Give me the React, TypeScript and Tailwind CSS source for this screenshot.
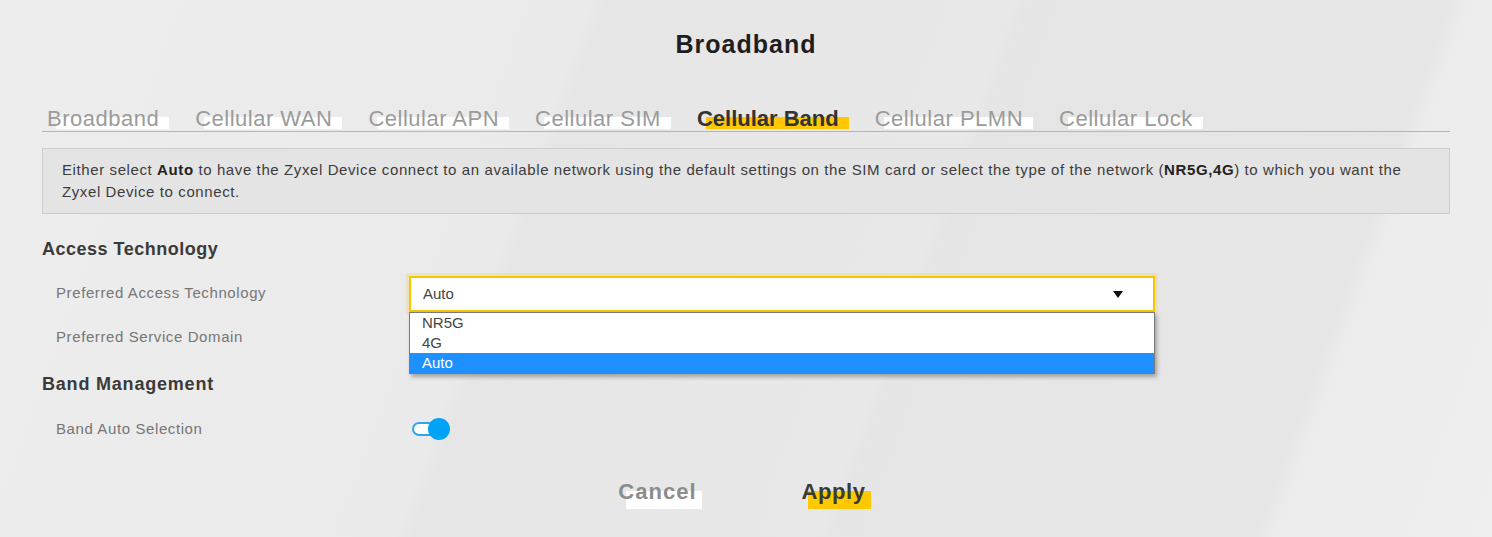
import React from "react";

const tabs = [
  "Broadband",
  "Cellular WAN",
  "Cellular APN",
  "Cellular SIM",
  "Cellular Band",
  "Cellular PLMN",
  "Cellular Lock",
];

function Tab({ label, active }: { label: string; active?: boolean }) {
  return (
    <div className="relative block text-[22px] leading-[24px]">
      <span
        className={
          "absolute left-[9px] right-[-10px] top-[10px] bottom-[2px] " +
          (active ? "bg-[#ffc800]" : "bg-white")
        }
      />
      <span
        className={
          "relative " +
          (active ? "font-bold text-[#333333]" : "text-[#9b9b9b] tracking-[0.5px]")
        }
      >
        {label}
      </span>
    </div>
  );
}

export default function App() {
  return (
    <div
      className="w-[1492px] h-[537px] overflow-hidden bg-[#e9e9e9] bg-[linear-gradient(110deg,#ededed_0%,#eaeaea_35%,#e6e6e6_36%,#e8e8e8_60%,#e5e5e5_61%,#e6e6e6_86%,#ececec_87%,#efefef_100%)] text-[#3c3c3c]"
      style={{ fontFamily: '"Liberation Sans", Arial, sans-serif' }}
    >
      <h1 className="pt-[30px] text-center text-[25px] leading-[28px] font-bold tracking-[1px] text-[#1e1e1e]">
        Broadband
      </h1>
      <div className="px-[42px] pt-[49px]">
        <div className="flex gap-[36px] border-b border-[#b4b4b4] pl-[5px]">
          {tabs.map((t) => (
            <Tab key={t} label={t} active={t === "Cellular Band"} />
          ))}
        </div>
        <div className="mt-[16px] border border-[#cdcdcd] bg-[#e4e4e4] px-[19px] pt-[10px] pb-[10px] text-[15px] leading-[22px] tracking-[0.6px] text-[#3c3c3c]">
          Either select <b className="text-[#222]">Auto</b> to have the Zyxel Device connect to an available network using the default settings on the SIM card or select the type of the network (<b className="text-[#222]">NR5G,4G</b>) to which you want the
          <br />
          Zyxel Device to connect.
        </div>

        <h2 className="mt-[23px] text-[18px] leading-[24px] font-bold tracking-[0.5px] text-[#3a3a3a]">
          Access Technology
        </h2>

        <div className="mt-[15px] flex items-start">
          <div className="w-[367px] pl-[14px] pt-[7px] text-[15px] leading-[20px] tracking-[0.6px] text-[#767676]">
            Preferred Access Technology
          </div>
          <div className="relative w-[746px]">
            <div className="flex h-[36px] items-center justify-between border-2 border-[#f7c600] bg-white pl-[12px] pr-[30px] text-[15px] text-[#444] shadow-[0_0_0_3px_rgba(240,210,120,0.35)]">
              <span>Auto</span>
              <svg width="10" height="7" viewBox="0 0 10 7">
                <path d="M0 0h10L5 7z" fill="#111" />
              </svg>
            </div>
            <div className="absolute left-0 right-0 top-[36px] z-10 border border-[#7a7a7a] bg-white text-[15px] leading-[20px] shadow-[2px_3px_4px_rgba(0,0,0,0.3)]">
              <div className="pl-[12px] text-[#444]">NR5G</div>
              <div className="pl-[12px] text-[#444]">4G</div>
              <div className="bg-[#1e90ff] pl-[12px] text-white">Auto</div>
            </div>
          </div>
        </div>

        <div className="mt-[15px] pl-[14px] text-[15px] leading-[20px] tracking-[0.6px] text-[#767676]">
          Preferred Service Domain
        </div>

        <h2 className="mt-[25px] text-[18px] leading-[24px] font-bold tracking-[0.8px] text-[#3a3a3a]">
          Band Management
        </h2>

        <div className="mt-[22px] flex items-center">
          <div className="w-[367px] pl-[14px] text-[15px] leading-[20px] tracking-[0.6px] text-[#767676]">
            Band Auto Selection
          </div>
          <div className="relative ml-[3px] flex h-[22px] w-[38px] items-center">
            <div className="h-[14px] w-[32px] rounded-full border-2 border-[#29a8f0] bg-white" />
            <div className="absolute right-0 top-0 h-[22px] w-[22px] rounded-full bg-[#00a3f5]" />
          </div>
        </div>

        <div className="mt-[40px] flex justify-center gap-[105px] pr-[8px]">
          <span className="relative inline-block">
            <span className="absolute left-[8px] right-[-5px] top-[11px] bottom-[-3px] bg-white" />
            <span className="relative text-[22px] leading-[24px] font-bold tracking-[1px] text-[#8c8c8c]">Cancel</span>
          </span>
          <span className="relative inline-block">
            <span className="absolute left-[6px] right-[-5px] top-[11px] bottom-[-3px] bg-[#ffc800]" />
            <span className="relative text-[22px] leading-[24px] font-bold tracking-[0.6px] text-[#3a3a3a]">Apply</span>
          </span>
        </div>
      </div>
    </div>
  );
}
